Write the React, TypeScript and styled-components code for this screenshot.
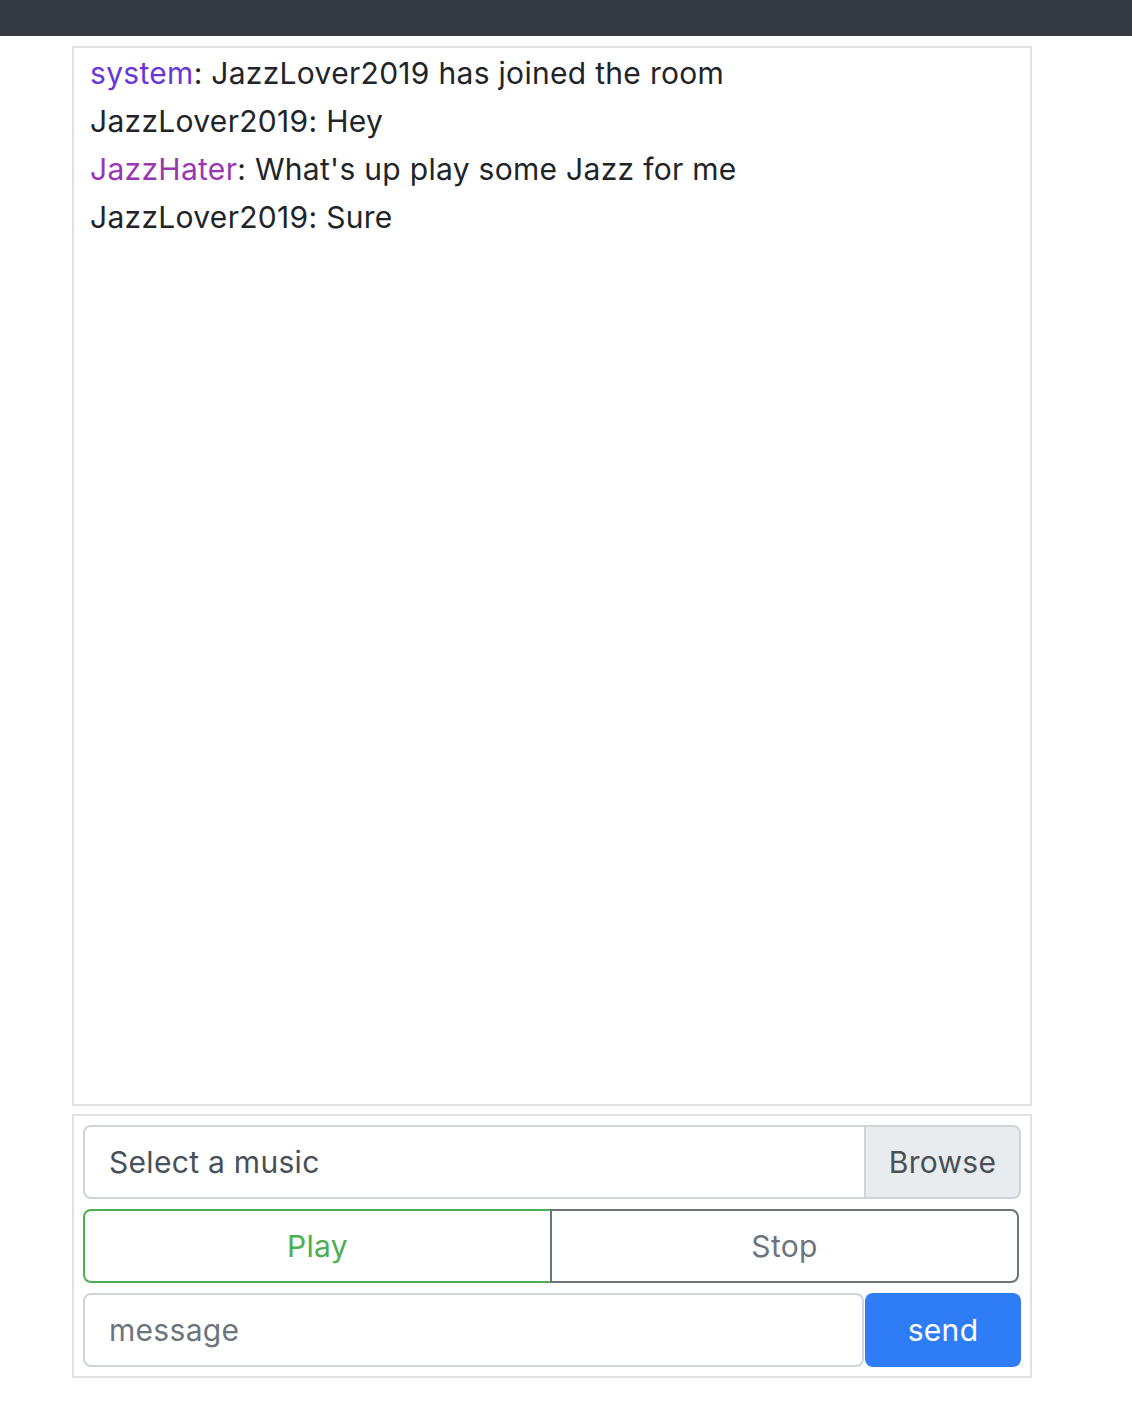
import React from "react";
import styled, { createGlobalStyle } from "styled-components";

const Global = createGlobalStyle`
  html, body { margin: 0; padding: 0; background: #fff; }
  body { font-family: Inter, "Noto Sans", sans-serif; color: #212529; }
  * { box-sizing: border-box; }
`;

const TopBar = styled.div`
  height: 36px;
  background: #343a40;
`;

const Main = styled.div`
  width: 960px;
  margin: 10px 0 0 72px;
  display: flex;
  flex-direction: column;
  gap: 8px;
`;

const ChatBox = styled.div`
  height: 1060px;
  border: 2px solid #dee2e6;
  padding: 1px 16px 0 16px;
  font-size: 30px;
  letter-spacing: 0.3px;
  line-height: 48px;
`;

const Line = styled.div``;

const Name = styled.span<{ $color?: string }>`
  color: ${(p) => p.$color || "inherit"};
`;

const Controls = styled.div`
  border: 2px solid #dee2e6;
  padding: 9px;
  display: flex;
  flex-direction: column;
  gap: 10px;
`;

const Group = styled.div`
  display: flex;
  height: 74px;
  font-size: 30px;
  letter-spacing: 0.3px;
`;

const FileField = styled.div`
  flex: 1;
  display: flex;
  align-items: center;
  padding: 0 24px;
  border: 2px solid #ced4da;
  border-right: none;
  border-radius: 8px 0 0 8px;
  color: #495057;
`;

const BrowseBtn = styled.div`
  width: 157px;
  display: flex;
  align-items: center;
  justify-content: center;
  background: #e9ecef;
  border: 2px solid #ced4da;
  border-radius: 0 8px 8px 0;
  color: #495057;
`;

const ToggleBtn = styled.button<{ $color: string; $side: "l" | "r" }>`
  flex: 1;
  background: #fff;
  border: 2px solid ${(p) => p.$color};
  border-radius: ${(p) => (p.$side === "l" ? "8px 0 0 8px" : "0 8px 8px 0")};
  ${(p) => (p.$side === "r" ? "margin-left: -2px;" : "")}
  color: ${(p) => p.$color};
  font-family: inherit;
  font-size: inherit;
  letter-spacing: inherit;
  padding: 0;
`;

const PlayRow = styled(Group)`
  margin-right: 2px;
`;

const MessageInput = styled.input`
  flex: 1;
  min-width: 0;
  border: 2px solid #ced4da;
  border-radius: 8px;
  padding: 0 24px;
  font-family: inherit;
  font-size: inherit;
  letter-spacing: inherit;
  color: #495057;
  outline: none;
  &::placeholder { color: #6c757d; }
`;

const SendBtn = styled.button`
  width: 156px;
  margin-left: 1px;
  background: #2f7df6;
  border: none;
  border-radius: 8px;
  color: #fff;
  font-family: inherit;
  font-size: inherit;
  letter-spacing: inherit;
  padding: 0;
`;

export default function App() {
  return (
    <>
      <Global />
      <TopBar />
      <Main>
        <ChatBox>
          <Line>
            <Name $color="#6a35d9">system</Name>: JazzLover2019 has joined the room
          </Line>
          <Line>JazzLover2019: Hey</Line>
          <Line>
            <Name $color="#9b36b3">JazzHater</Name>: What's up play some Jazz for me
          </Line>
          <Line>JazzLover2019: Sure</Line>
        </ChatBox>
        <Controls>
          <Group>
            <FileField>Select a music</FileField>
            <BrowseBtn>Browse</BrowseBtn>
          </Group>
          <PlayRow>
            <ToggleBtn $color="#4caf50" $side="l">Play</ToggleBtn>
            <ToggleBtn $color="#6c757d" $side="r">Stop</ToggleBtn>
          </PlayRow>
          <Group>
            <MessageInput placeholder="message" />
            <SendBtn>send</SendBtn>
          </Group>
        </Controls>
      </Main>
    </>
  );
}
